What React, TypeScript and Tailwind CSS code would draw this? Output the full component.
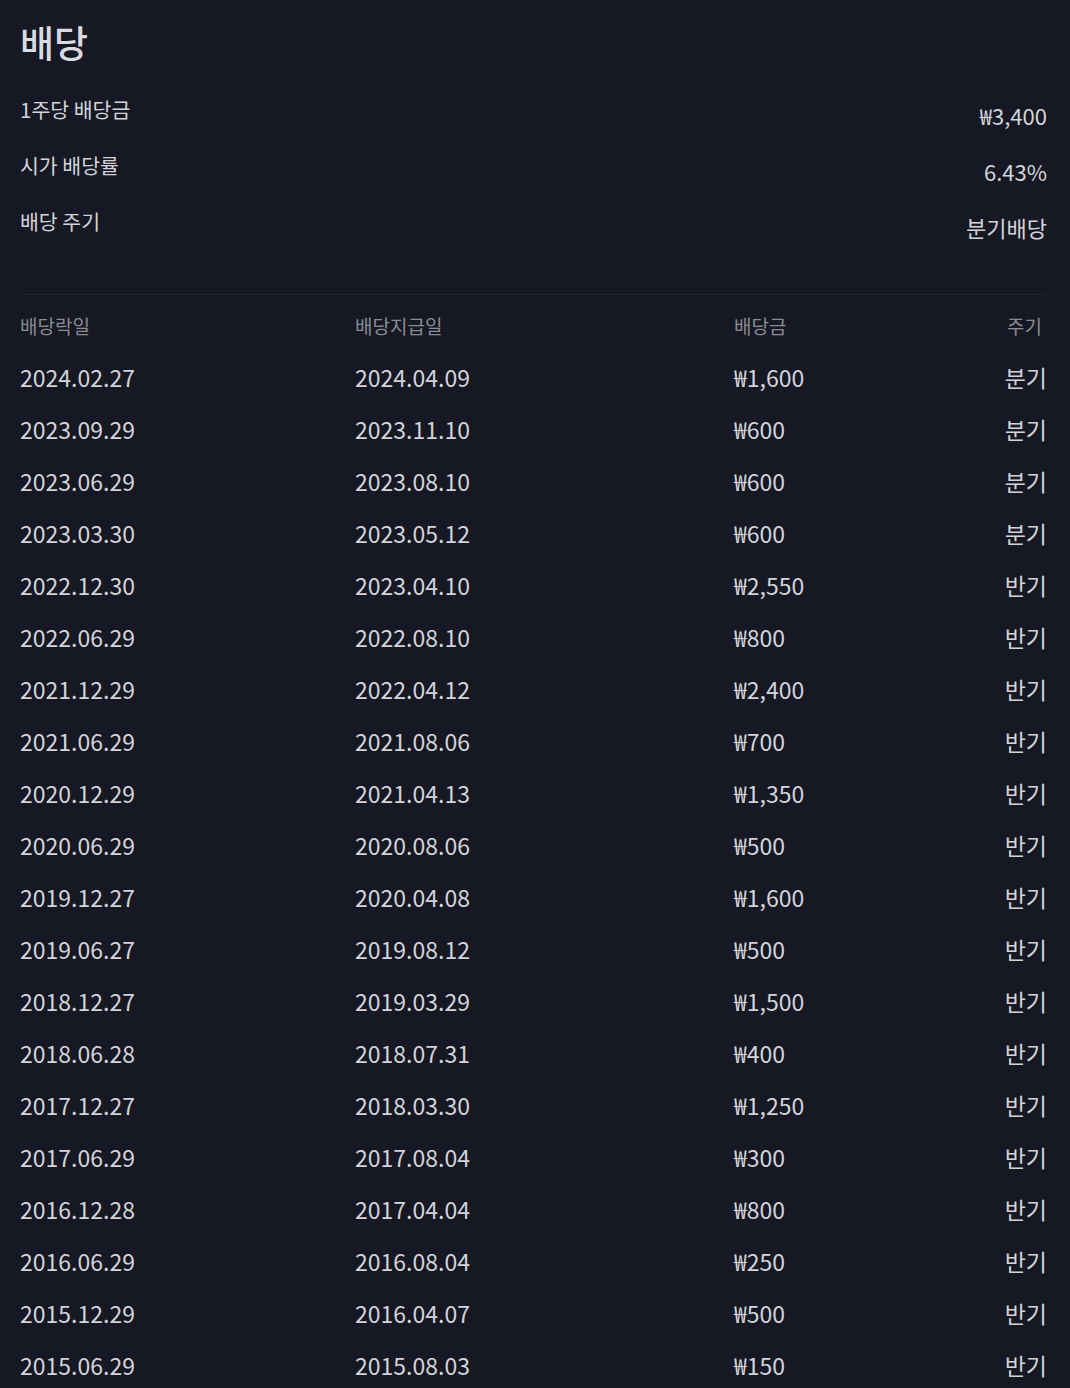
const summary = [
  { label: "1주당 배당금", value: "₩3,400" },
  { label: "시가 배당률", value: "6.43%" },
  { label: "배당 주기", value: "분기배당" },
];

const rows = [
  ["2024.02.27", "2024.04.09", "₩1,600", "분기"],
  ["2023.09.29", "2023.11.10", "₩600", "분기"],
  ["2023.06.29", "2023.08.10", "₩600", "분기"],
  ["2023.03.30", "2023.05.12", "₩600", "분기"],
  ["2022.12.30", "2023.04.10", "₩2,550", "반기"],
  ["2022.06.29", "2022.08.10", "₩800", "반기"],
  ["2021.12.29", "2022.04.12", "₩2,400", "반기"],
  ["2021.06.29", "2021.08.06", "₩700", "반기"],
  ["2020.12.29", "2021.04.13", "₩1,350", "반기"],
  ["2020.06.29", "2020.08.06", "₩500", "반기"],
  ["2019.12.27", "2020.04.08", "₩1,600", "반기"],
  ["2019.06.27", "2019.08.12", "₩500", "반기"],
  ["2018.12.27", "2019.03.29", "₩1,500", "반기"],
  ["2018.06.28", "2018.07.31", "₩400", "반기"],
  ["2017.12.27", "2018.03.30", "₩1,250", "반기"],
  ["2017.06.29", "2017.08.04", "₩300", "반기"],
  ["2016.12.28", "2017.04.04", "₩800", "반기"],
  ["2016.06.29", "2016.08.04", "₩250", "반기"],
  ["2015.12.29", "2016.04.07", "₩500", "반기"],
  ["2015.06.29", "2015.08.03", "₩150", "반기"],
];

export default function App() {
  return (
    <div
      className="min-h-[1388px] bg-[#161823] pl-5 pr-[23px] text-[#d3d4da]"
      style={{ fontFamily: '"Noto Sans CJK KR", "Noto Sans", sans-serif' }}
    >
      <h1 className="pt-[18px] text-[37px] font-medium leading-[48px] text-[#d9dae2]">배당</h1>

      <div className="mt-4">
        {summary.map((s) => (
          <div key={s.label} className="flex h-14 justify-between">
            <span className="text-[20.5px] leading-[54px]">{s.label}</span>
            <span className="pt-[5px] text-[22px] leading-[56px]">{s.value}</span>
          </div>
        ))}
      </div>

      <div className="mt-[44px] border-t border-[#21232d] pt-[6px]">
        <div className="grid h-[50px] grid-cols-[335px_379px_1fr_auto] items-center text-[19px] text-[#8b8c93]">
          <span>배당락일</span>
          <span>배당지급일</span>
          <span>배당금</span>
          <span className="pr-[5px] text-right">주기</span>
        </div>
        {rows.map((r) => (
          <div
            key={r[0]}
            className="grid h-[52px] grid-cols-[335px_379px_1fr_auto] items-center text-[23px]"
          >
            <span>{r[0]}</span>
            <span>{r[1]}</span>
            <span>{r[2]}</span>
            <span className="text-right">{r[3]}</span>
          </div>
        ))}
      </div>
    </div>
  );
}
